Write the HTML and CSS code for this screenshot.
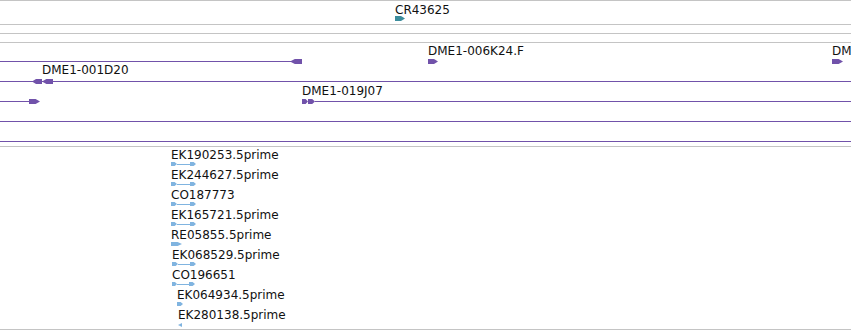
FILE: index.html
```html
<!DOCTYPE html>
<html>
    <head>
        <meta charset="UTF-8" />
        <meta name="viewport" content="width=device-width, initial-scale=1.0"/>
        <link rel="stylesheet" href="styles.css">
    </head>
    <body>
        <div class="view">
            <div class="track gene">
                <span class="label" style="left:395px">CR43625</span>
                <div class="arrow right teal" style="left:395px;width:10px"></div>
            </div>
            <div class="track empty"></div>
            <div class="track empty"></div>
            <div class="track clone">
                <div class="row">
                    <div class="line" style="left:0;width:291px"></div>
                    <div class="arrow left" style="left:290px;width:12px"></div>
                    <span class="label" style="left:428px">DME1-006K24.F</span>
                    <div class="arrow right" style="left:428px;width:10px"></div>
                    <span class="label" style="left:832px">DM</span>
                    <div class="arrow right" style="left:832px;width:11px"></div>
                </div>
                <div class="row">
                    <div class="line" style="left:0;width:851px"></div>
                    <div class="arrow left" style="left:32px;width:10px"></div>
                    <div class="arrow left" style="left:42px;width:11px"></div>
                    <span class="label up" style="left:42px">DME1-001D20</span>
                </div>
                <div class="row">
                    <div class="line" style="left:0;width:30px"></div>
                    <div class="arrow right" style="left:29px;width:11px"></div>
                    <span class="label" style="left:302px">DME1-019J07</span>
                    <div class="arrow right" style="left:302px;width:6px"></div>
                    <div class="arrow right" style="left:308px;width:7px"></div>
                    <div class="line" style="left:315px;width:536px"></div>
                </div>
                <div class="row">
                    <div class="line" style="left:0;width:851px"></div>
                </div>
                <div class="row">
                    <div class="line" style="left:0;width:851px"></div>
                </div>
            </div>
            <div class="track est">
                <div class="row">
                    <span class="label" style="left:171px">EK190253.5prime</span>
                    <div class="head" style="left:171px;width:6px"></div>
                    <div class="link" style="left:177px;width:13px"></div>
                    <div class="head" style="left:190px;width:6px"></div>
                </div>
                <div class="row">
                    <span class="label" style="left:171px">EK244627.5prime</span>
                    <div class="head" style="left:171px;width:6px"></div>
                    <div class="link" style="left:177px;width:13px"></div>
                    <div class="head" style="left:190px;width:6px"></div>
                </div>
                <div class="row">
                    <span class="label" style="left:171px">CO187773</span>
                    <div class="head" style="left:171px;width:6px"></div>
                    <div class="link" style="left:177px;width:13px"></div>
                    <div class="head" style="left:190px;width:6px"></div>
                </div>
                <div class="row">
                    <span class="label" style="left:171px">EK165721.5prime</span>
                    <div class="head" style="left:171px;width:6px"></div>
                    <div class="link" style="left:177px;width:13px"></div>
                    <div class="head" style="left:190px;width:6px"></div>
                </div>
                <div class="row">
                    <span class="label" style="left:171px">RE05855.5prime</span>
                    <div class="head" style="left:171px;width:11px"></div>
                </div>
                <div class="row">
                    <span class="label" style="left:172px">EK068529.5prime</span>
                    <div class="head" style="left:172px;width:6px"></div>
                    <div class="link" style="left:178px;width:12px"></div>
                    <div class="head" style="left:190px;width:6px"></div>
                </div>
                <div class="row">
                    <span class="label" style="left:172px">CO196651</span>
                    <div class="head" style="left:172px;width:5px"></div>
                    <div class="link" style="left:177px;width:12px"></div>
                    <div class="head" style="left:189px;width:6px"></div>
                </div>
                <div class="row">
                    <span class="label" style="left:177px">EK064934.5prime</span>
                    <div class="head" style="left:177px;width:6px"></div>
                </div>
                <div class="row">
                    <span class="label" style="left:178px">EK280138.5prime</span>
                    <div class="head back" style="left:178px;width:4px"></div>
                </div>
            </div>
        </div>
    </body>
</html>
```
FILE: styles.css
```css
body {
    margin: 0;
    background: #fff;
    color: #111;
    font-family: "DejaVu Sans", sans-serif;
    font-size: 12px;
    overflow: hidden;
}
.view {
    width: 851px;
    border-top: 1px solid #c4c4c4;
    overflow: hidden;
}
.track {
    position: relative;
    border-bottom: 1px solid #c4c4c4;
}
.gene {
    height: 23px;
}
.gene .label {
    top: 2px;
}
.gene .arrow {
    top: 15px;
}
.empty {
    height: 8px;
}
.clone {
    height: 103px;
}
.est {
    height: 182px;
}
.row {
    position: relative;
    height: 20px;
}
.label {
    position: absolute;
    top: 1px;
    line-height: 14px;
    white-space: nowrap;
}
.label.up {
    top: 0;
}
.line {
    position: absolute;
    top: 18px;
    height: 1px;
    background: #7152aa;
}
.arrow {
    position: absolute;
    top: 16px;
    height: 5px;
    background: #7152aa;
}
.arrow.right {
    clip-path: polygon(0 0, 60% 0, 100% 50%, 60% 100%, 0 100%);
}
.arrow.left {
    clip-path: polygon(0 50%, 40% 0, 100% 0, 100% 100%, 40% 100%);
}
.arrow.teal {
    background: #3c8d9c;
}
.head {
    position: absolute;
    top: 15px;
    height: 4px;
    background: #80b4e0;
    clip-path: polygon(0 0, 60% 0, 100% 50%, 60% 100%, 0 100%);
}
.head.back {
    top: 16px;
    clip-path: polygon(0 50%, 100% 0, 100% 100%);
}
.link {
    position: absolute;
    top: 17px;
    height: 1px;
    background: #80b4e0;
}
```
